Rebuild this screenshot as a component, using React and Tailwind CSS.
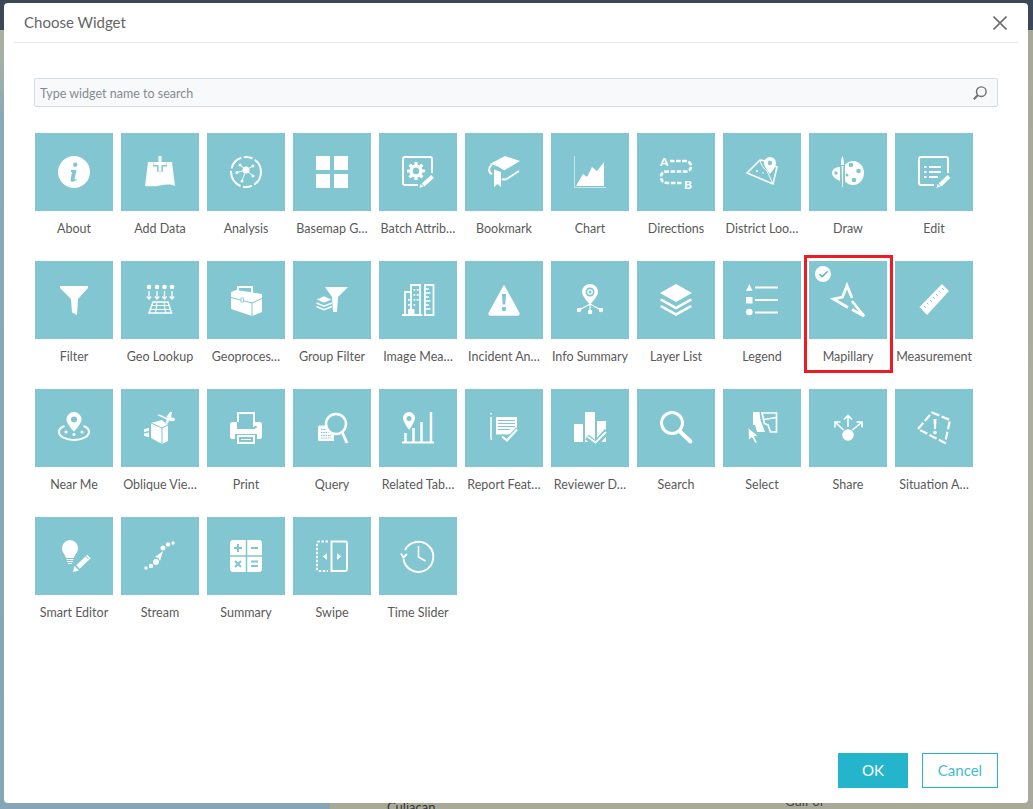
import { Check } from 'lucide-react'

const TEAL = '#81c6d0'

function Ic({ children }) {
  return (
    <svg width="32" height="32" viewBox="0 0 32 32" fill="white" className="overflow-visible">
      {children}
    </svg>
  )
}

// Lapiz con halo del color del tile
function Pencil({ d = 'M20.5 28.5 30 20' }) {
  return (
    <g fill="none">
      <path d={d} stroke={TEAL} strokeWidth="7" />
      <path d={d} stroke="white" strokeWidth="4" />
    </g>
  )
}

function Gear({ x, y }) {
  const teeth = [0, 45, 90, 135]
  return (
    <g transform={`translate(${x} ${y})`}>
      {teeth.map(a => <rect key={a} x="-1.6" y="-9" width="3.2" height="18" rx=".6" transform={`rotate(${a})`} />)}
      <circle r="6.6" />
      <circle r="3.2" fill={TEAL} />
    </g>
  )
}

const icons = {
  about: (
    <>
      <circle cx="16" cy="16" r="16" />
      <circle cx="17.2" cy="8.8" r="2.2" fill={TEAL} />
      <path d="M13 14h5.5l-2 9c-.1.7.6.8 2-.3l.5.9c-2 2-6.8 3.5-6.4-.2l1.4-7.4h-1.2z" fill={TEAL} />
    </>
  ),
  addData: (
    <>
      <path d="M4 6h24l3 24c-5-2.5-10-1.5-15-.5-5 1-10 1-15 .5z" />
      <path d="M16 0v15.5M9 7.5h14" stroke={TEAL} strokeWidth="6" fill="none" />
      <path d="M16 0v15M9.5 7.5h13" stroke="white" strokeWidth="3" fill="none" />
    </>
  ),
  analysis: (
    <>
      <circle cx="16" cy="16" r="15" fill="none" stroke="white" strokeWidth="2" strokeDasharray="15 2.5 9 2.5 19 2.5" />
      <path d="M16 14 7 16.5M16 14 10 9M16 14 23 10M16 14 23 20M16 14 12 25" stroke="white" strokeWidth="1" />
      <circle cx="16" cy="14" r="3.5" />
      <circle cx="7" cy="16.5" r="1.5" /><circle cx="10" cy="9" r="1.5" /><circle cx="23" cy="10" r="1.5" />
      <circle cx="23" cy="20" r="1.5" /><circle cx="12" cy="25" r="1.5" />
    </>
  ),
  basemap: (
    <>
      <rect x="0" y="0" width="14" height="14" /><rect x="18" y="0" width="14" height="14" />
      <rect x="0" y="18" width="14" height="14" /><rect x="18" y="18" width="14" height="14" />
    </>
  ),
  batch: (
    <>
      <path d="M30 17V3a2 2 0 0 0-2-2H3a2 2 0 0 0-2 2v24a2 2 0 0 0 2 2h13" fill="none" stroke="white" strokeWidth="2" />
      <Gear x={14} y={15} />
      <Pencil d="M21 29 30.5 20.5" />
      <path d="M17.5 32l1-4 3 2.5z" />
    </>
  ),
  bookmark: (
    <>
      <path d="M2 8 17 0l15 5-16 9.5C12 11 7 9 2 8z" />
      <path d="M3.5 9C0 12 .5 17 4 18" fill="none" stroke="white" strokeWidth="2" />
      <path d="M6 13.5 13 16v15l-3.5-3L6 31z" />
      <path d="M14 23c2 1 4 .5 5.5-.5L31 15" fill="none" stroke="white" strokeWidth="2" />
    </>
  ),
  chart: (
    <>
      <path d="M.5 0v31.5H32" fill="none" stroke="white" strokeOpacity=".55" />
      <path d="M2 30 9 18l4 3 5-10 5 4 7-9v24z" />
    </>
  ),
  directions: (
    <>
      <path d="M10 5h16q5 1 5 5.5t-5 5H7q-6 0-6 5.5t6 6h16" fill="none" stroke="white" strokeWidth="2.7" strokeDasharray="4.5 1.6" />
      <text x="0" y="9.5" fontSize="12" fontWeight="900" fontFamily="Lato, sans-serif">A</text>
      <text x="24" y="33" fontSize="12" fontWeight="900" fontFamily="Lato, sans-serif">B</text>
    </>
  ),
  district: (
    <>
      <path d="M20 5 14 4 1 17l26 11 4-17-2-.8" fill="none" stroke="white" strokeWidth="1.6" />
      <path d="M14 4c1 5 4 9 7 11l6 13" fill="none" stroke="white" strokeWidth="1" />
      <circle cx="11" cy="15" r="1" /><circle cx="17" cy="17" r=".8" />
      <path d="M24 1a6 6 0 0 0-6 6c0 4 6 11 6 11s6-7 6-11a6 6 0 0 0-6-6z" />
      <circle cx="24" cy="7" r="2.2" fill={TEAL} />
    </>
  ),
  draw: (
    <>
      <ellipse cx="21" cy="17" rx="11" ry="12" />
      <path d="M8 11c-5 0-8 3-8 6 0 4 4 6 8 8z" />
      <circle cx="4" cy="17" r="1.7" fill={TEAL} />
      <circle cx="19" cy="9" r="2.3" fill={TEAL} /><circle cx="26.5" cy="15" r="2.3" fill={TEAL} />
      <circle cx="22" cy="24" r="2.3" fill={TEAL} /><circle cx="15" cy="19" r="1.5" fill={TEAL} />
      <path d="M10.5 0v31" stroke={TEAL} strokeWidth="5" />
      <path d="M10.5 0c1.2 2 1.5 5 1.3 9H9.2c-.2-4 .1-7 1.3-9zM9.7 10h1.6l-.4 21h-.8z" />
    </>
  ),
  edit: (
    <>
      <path d="M30 17V3a2 2 0 0 0-2-2H3a2 2 0 0 0-2 2v24a2 2 0 0 0 2 2h13" fill="none" stroke="white" strokeWidth="2" />
      <path d="M6 11h2.5M6 16h2.5M6 21h2.5M11 11h12M11 16h12M11 21h9" stroke="white" strokeWidth="2" />
      <Pencil d="M22 29 31 20.5" />
      <path d="M18.5 32l1-4 3 2.5z" />
    </>
  ),
  filter: <path d="M2 2h28v2L20 15l-1 16-5-2.5L13 15 2 4z" />,
  geoLookup: (
    <>
      {[5, 13, 20.5, 28].map(x => (
        <g key={x}>
          <circle cx={x} cy="3" r="2.3" />
          <path d={`M${x} 7v7.5M${x - 2.2} 12.5 ${x} 15l2.2-2.5`} fill="none" stroke="white" strokeWidth="1.3" />
        </g>
      ))}
      <path d="M9 18h15l3.5 11H5z" fill="none" stroke="white" strokeWidth="1.5" />
      <path d="M8 21.5h17M7 25.5h19M13 18l-1.5 11M20 18l1.5 11" stroke="white" strokeWidth="1" />
    </>
  ),
  toolbox: (
    <>
      <path d="M8 8V3h14v7" fill="none" stroke="white" strokeWidth="2" />
      <path d="M1 8l5-2 26 4v18l-10 4L1 25z" />
      <path d="M1 13.5 22 19l10-4.5M22 19v13" fill="none" stroke={TEAL} strokeWidth="1" />
      <rect x="11" y="14" width="2.5" height="4" fill="white" stroke={TEAL} strokeWidth=".8" />
    </>
  ),
  groupFilter: (
    <>
      <path d="M9 3h23L22 13l-1 15h-4l-1-15z" />
      <path d="M8 12l8 3.5-8 3.5-8-3.5z" stroke={TEAL} strokeWidth=".6" />
      <path d="M.5 19 8 22.2l8-3.2M.5 22.5 8 25.7l8-3.2" fill="none" stroke="white" strokeWidth="1.5" />
    </>
  ),
  imageMeasure: (
    <>
      <path d="M9 8H3v22M9 30V1h9v29" fill="none" stroke="white" strokeWidth="1.8" />
      <path d="M0 31h20.5" stroke="white" strokeWidth="2" />
      <path d="M11.5 5h1.8v1.8h-1.8zM14.7 5h1.8v1.8h-1.8zM11.5 10h1.8v1.8h-1.8zM14.7 10h1.8v1.8h-1.8zM11.5 15h1.8v1.8h-1.8zM14.7 15h1.8v1.8h-1.8zM6 15h1.8v1.8H6zM6 20h1.8v1.8H6zM11.5 20h1.8v1.8h-1.8z" />
      <path d="M6 30v-5h6.5v5z" />
      <rect x="23" y="1" width="8.5" height="30" fill="none" stroke="white" strokeWidth="1.8" />
      <path d="M23 5h4M23 9h5.5M23 13h4M23 17h5.5M23 21h4M23 25h5.5" stroke="white" strokeWidth="1.3" />
    </>
  ),
  incident: (
    <>
      <path d="M16 2 31 29.5q0 1.5-1.5 1.5h-27Q1 31 1 29.5z" stroke="white" strokeWidth="1.5" strokeLinejoin="round" />
      <path d="M14 10h4l-.7 10.5h-2.6z" fill={TEAL} />
      <circle cx="16" cy="25" r="2.3" fill={TEAL} />
    </>
  ),
  infoSummary: (
    <>
      <path d="M16 0a8 8 0 0 0-8 8c0 4.5 8 12.5 8 12.5S24 12.5 24 8a8 8 0 0 0-8-8z" />
      <circle cx="16" cy="8" r="4.5" fill={TEAL} />
      <circle cx="16" cy="8" r="2.8" fill="white" />
      <circle cx="16" cy="8" r="1.5" fill={TEAL} />
      <path d="M16 20v8M16 20 5 26M16 20l11 6" stroke="white" strokeWidth="1.2" />
      <circle cx="5" cy="26" r="2.3" /><circle cx="16" cy="28" r="2.3" /><circle cx="27" cy="26" r="2.3" />
    </>
  ),
  layers: (
    <>
      <path d="M16 0 32 9l-16 9L0 9z" />
      <path d="m1.5 14.5 14.5 8 14.5-8 1.5 2-16 9-16-9z" />
      <path d="m1.5 21 14.5 8 14.5-8 1.5 2-16 9-16-9z" />
    </>
  ),
  legend: (
    <>
      <path d="M3.3 0 6.6 7H0z" />
      <rect x="0" y="13" width="6.5" height="6.5" />
      <circle cx="3.3" cy="28" r="3.3" />
      <path d="M9 3.5h23M9 16h23M9 28.5h23" stroke="white" strokeWidth="2" />
    </>
  ),
  mapillary: (
    <>
      <path d="M20 14 15 1.5 10.5 13 1.5 15 16 23.5" fill="none" stroke="white" strokeWidth="2.8" />
      <path d="M20 17 32 32l-12-6.5" fill="none" stroke="white" strokeWidth="2.8" />
    </>
  ),
  measurement: (
    <>
      <path d="M1.5 23 24 0l7 7L9 31z" />
      <path d="M6 22l2 2M9 19l1.5 1.5M12 16l2 2M15 13l1.5 1.5M18 10l2 2M21 7l1.5 1.5M24 4l2 2" stroke={TEAL} strokeWidth="1" />
    </>
  ),
  nearMe: (
    <>
      <path d="M6.5 14C2 15.5 1 18 1 20c0 4.5 7 8 15 8s15-3.5 15-8c0-2-1-4.5-5.5-6" fill="none" stroke="white" strokeWidth="2" />
      <path d="M16 0a7.5 7.5 0 0 0-7.5 7.5C8.5 12 16 19.5 16 19.5S23.5 12 23.5 7.5A7.5 7.5 0 0 0 16 0z" />
      <circle cx="16" cy="7.5" r="3" fill={TEAL} />
      <circle cx="8" cy="20" r="1.6" /><circle cx="16" cy="22.5" r="1.6" /><circle cx="24" cy="20" r="1.6" />
    </>
  ),
  oblique: (
    <>
      <path d="M7 11l11-3 6 5v16l-6 3-11-6z" />
      <path d="M7 11l11 5 6-3M18 16v16" fill="none" stroke={TEAL} strokeWidth="1" />
      <path d="M0 17l5-1v3l-5 1zM0 21.5l5-1V25l-5-1z" />
      <path d="M13 3l3-.5 7 3.5 4-.5c2-.3 4 .5 4 2s-2.5 2-4 1.5l-2-.5-1 3h-2l.5-4z" />
      <path d="M22 5.5 26 0h2l-1 6z" />
    </>
  ),
  print: (
    <>
      <path d="M8 10V1h16v14" fill="none" stroke="white" strokeWidth="2" />
      <path d="M2.5 10H7v7h18v-7h4.5A2.5 2.5 0 0 1 32 12.5V25a2 2 0 0 1-2 2h-3v-5H5v5H2a2 2 0 0 1-2-2V12.5A2.5 2.5 0 0 1 2.5 10z" />
      <rect x="8" y="24" width="16" height="7" fill="none" stroke="white" strokeWidth="2" />
      <path d="M11 27.5h10" stroke="white" strokeWidth="1" />
      <circle cx="25.5" cy="15" r="1.3" fill={TEAL} />
    </>
  ),
  query: (
    <>
      <path d="M3.5 13.5H10l8 9V29H3.5A1.5 1.5 0 0 1 2 27.5V15a1.5 1.5 0 0 1 1.5-1.5z" />
      <path d="M5 17.5h7M5 20.5h8M5 23.5h10M5 26h10" stroke={TEAL} strokeWidth="1" strokeDasharray="1.5 .8" />
      <circle cx="20" cy="12" r="10" fill={TEAL} stroke="white" strokeWidth="2.5" />
      <path d="m26 20 5 11" stroke="white" strokeWidth="2.8" />
    </>
  ),
  relatedTable: (
    <>
      <path d="M7 0a6 6 0 0 0-6 6c0 4 6 12 6 12s6-8 6-12a6 6 0 0 0-6-6z" />
      <circle cx="7" cy="6.5" r="2.5" fill={TEAL} />
      <path d="M0 30.5h32" stroke="white" strokeWidth="2" />
      <path d="M3.5 21v9M11.5 16v14M19.5 10v20M29 0v30" stroke="white" strokeWidth="2.5" />
    </>
  ),
  report: (
    <>
      <path d="M3 1v1.5M3 5v21l.5 2" fill="none" stroke="white" strokeWidth="1.5" />
      <path d="M8 5h21v15l-9 2.5H8z" />
      <path d="M10 8.5h17M10 11.5h17M10 14.5h17M10 17.5h12" stroke={TEAL} strokeWidth="1" />
      <path d="m13 24 6 5 11-12" fill="none" stroke={TEAL} strokeWidth="5" />
      <path d="m14 24.5 5 4 10-11" fill="none" stroke="white" strokeWidth="2.2" />
    </>
  ),
  reviewer: (
    <>
      <rect x="0" y="12" width="9" height="18" /><rect x="11" y="0" width="10" height="30" /><rect x="23" y="9" width="9" height="21" />
      <path d="m13 25 8.5 7L33 19" fill="none" stroke={TEAL} strokeWidth="6" />
      <path d="m14 25 7.5 5.5L32 20" fill="none" stroke="white" strokeWidth="1.8" />
    </>
  ),
  search: (
    <>
      <circle cx="12" cy="11" r="10.5" fill="none" stroke="white" strokeWidth="3" />
      <path d="m20 19.5 10.5 10" stroke="white" strokeWidth="4" strokeLinecap="round" />
    </>
  ),
  select: (
    <>
      <path d="M7 0h6.5l1 8 4.5 12H11L9 13H7z" />
      <path d="M16 1h14.5v19h-6l-2.5-7-3.5-1.5z" fill="none" stroke="white" strokeWidth="1.7" />
      <path d="M18 7.5l12.5-2" stroke="white" strokeWidth="1.5" />
      <path d="M2 15.5 12.5 24l-4 .5 3 6-2.5 1-3-6-3.5 3z" stroke={TEAL} strokeWidth="1" />
    </>
  ),
  share: (
    <>
      <circle cx="16" cy="23" r="5.8" />
      <path d="M16 15V4M12 7.5l4-4 4 4M11.5 18 3 10M3 15.5V10h5.5M20.5 18 30 10M24.5 10H30v5.5" fill="none" stroke="white" strokeWidth="1.6" />
    </>
  ),
  situation: (
    <>
      <path d="M14 .5 32 8l-5 23-27-14z" fill="none" stroke="white" strokeWidth="2.2" strokeLinejoin="round" strokeDasharray="8 2.5" />
      <path d="M15.5 7h3l-.5 10h-2z" />
      <circle cx="17" cy="20.5" r="1.8" />
    </>
  ),
  smartEditor: (
    <>
      <path d="M12 0a8.2 8.2 0 0 0-8 8.5c0 4 3 5.5 4 9.5h8c1-4 4-5.5 4-9.5A8.2 8.2 0 0 0 12 0z" />
      <path d="M8.5 19.5h7M9 21.5h6M10 23.5h4" stroke="white" strokeWidth="1" />
      <path d="m20 27 11-10.5" stroke="white" strokeWidth="5" />
      <path d="m15 32 1.5-6 4.5 4.5z" />
      <path d="m27 15 3.5 4" stroke={TEAL} strokeWidth="1" />
    </>
  ),
  stream: (
    <>
      <circle cx="2" cy="28" r="1.7" /><circle cx="7" cy="26" r="2.2" /><circle cx="12" cy="22" r="3" />
      <path d="M11 17 19 11l-3 10-1.5-3z" />
      <circle cx="19" cy="8" r="2.5" /><circle cx="24" cy="4.5" r="2.2" /><circle cx="29" cy="3" r="1.7" />
    </>
  ),
  summary: (
    <>
      <rect x="0" y="0" width="32" height="32" rx="3" />
      <path d="M16.5 0v32M0 16h32" stroke={TEAL} strokeWidth="1.5" />
      <path d="M4 8h8M8 4v8M21 8h7M5 21l6 6M11 21l-6 6M21 21.5h7M21 26h7" stroke={TEAL} strokeWidth="2" />
    </>
  ),
  swipe: (
    <>
      <path d="M12 1.5H3a2 2 0 0 0-2 2V29a2 2 0 0 0 2 2h9" fill="none" stroke="white" strokeWidth="2" strokeDasharray="2.5 1.5" />
      <path d="M15.5 1.5H29a2 2 0 0 1 2 2V29a2 2 0 0 1-2 2H15.5z" fill="none" stroke="white" strokeWidth="2" />
      <path d="M7 16.5 11 13v7zM25 16.5 21 13v7z" />
    </>
  ),
  timeSlider: (
    <>
      <path d="M3 10A15 15 0 1 1 1.5 19" fill="none" stroke="white" strokeWidth="2" />
      <path d="M-1 13.5l2.5 4 3.500-3.500" fill="none" stroke="white" strokeWidth="2" />
      <path d="M16.5 6v11l7 4" fill="none" stroke="white" strokeWidth="1.6" />
    </>
  ),
}

const widgets = [
  ['About', 'about'], ['Add Data', 'addData'], ['Analysis', 'analysis'], ['Basemap G…', 'basemap'],
  ['Batch Attrib…', 'batch'], ['Bookmark', 'bookmark'], ['Chart', 'chart'], ['Directions', 'directions'],
  ['District Loo…', 'district'], ['Draw', 'draw'], ['Edit', 'edit'],
  ['Filter', 'filter'], ['Geo Lookup', 'geoLookup'], ['Geoproces…', 'toolbox'], ['Group Filter', 'groupFilter'],
  ['Image Mea…', 'imageMeasure'], ['Incident An…', 'incident'], ['Info Summary', 'infoSummary'], ['Layer List', 'layers'],
  ['Legend', 'legend'], ['Mapillary', 'mapillary'], ['Measurement', 'measurement'],
  ['Near Me', 'nearMe'], ['Oblique Vie…', 'oblique'], ['Print', 'print'], ['Query', 'query'],
  ['Related Tab…', 'relatedTable'], ['Report Feat…', 'report'], ['Reviewer D…', 'reviewer'], ['Search', 'search'],
  ['Select', 'select'], ['Share', 'share'], ['Situation A…', 'situation'],
  ['Smart Editor', 'smartEditor'], ['Stream', 'stream'], ['Summary', 'summary'], ['Swipe', 'swipe'], ['Time Slider', 'timeSlider'],
]

function WidgetTile({ label, icon }) {
  const selected = label === 'Mapillary'
  return (
    <div className="relative">
      {selected && <div className="absolute left-[-5px] top-[-6px] w-[89px] h-[118px] border-[3px] border-[#ed1c24]" />}
      <div className="relative w-[78px] h-[78px] bg-[#81c6d0] flex items-center justify-center">
        {selected && (
          <span className="absolute left-[6px] top-[5px] w-[16px] h-[16px] rounded-full bg-white flex items-center justify-center">
            <Check size={11} strokeWidth={3} className="text-[#5fa9b8]" />
          </span>
        )}
        <Ic>{icons[icon]}</Ic>
      </div>
      <p className="mt-[9px] -mx-1 text-center text-[12.5px] leading-[18px] text-[#5a5a5a] whitespace-nowrap">{label}</p>
    </div>
  )
}

export default function App() {
  return (
    <div className="relative w-[1033px] h-[809px] overflow-hidden flex flex-col font-['Lato','Liberation_Sans',sans-serif]">
      {/* Mapa de fondo, casi todo tapado por el dialogo */}
      <div className="h-[30px] bg-[#3c4855]" />
      <div className="flex-1 flex">
        <div className="w-[330px] bg-[linear-gradient(180deg,#aeb09a_0,#9fb0a8_40px,#8aa8b8_90px,#86a6b8_100%)]" />
        <div className="flex-1 bg-[linear-gradient(180deg,#a8a896_0,#b0ae9c_60%,#a9a99a_100%)]" />
      </div>
      <span className="absolute left-[387px] top-[798px] text-[13px] text-[#333]">Culiacan</span>
      <span className="absolute left-[785px] top-[792px] text-[13px] text-[#444]">Gulf of</span>

      {/* Dialogo */}
      <div className="absolute left-[4px] top-[3px] w-[1024px] h-[800px] bg-white rounded-[4px] flex flex-col">
        <div className="mx-[10px] h-[40px] border-b border-[#e3ecf3] flex items-center justify-between pl-[10px] pr-[10px]">
          <h1 className="text-[15px] font-normal text-[#666]">Choose Widget</h1>
          <svg width="14" height="14" viewBox="0 0 14 14" className="mr-[1px]">
            <path d="M.5.5l13 13M13.5.5l-13 13" stroke="#6e6e6e" strokeWidth="1.6" />
          </svg>
        </div>

        <div className="mx-[30px] mt-[35px] h-[29px] bg-[#f8f9fb] border border-[#d3dde5] rounded-[2px] flex items-center justify-between pl-[5px] pr-[10px]">
          <span className="pt-[3px] text-[12.5px] text-[#858a90]">Type widget name to search</span>
          <svg width="14" height="14" viewBox="0 0 14 14" fill="none" stroke="#6e6e6e">
            <circle cx="8.3" cy="5.7" r="4.8" strokeWidth="1.4" />
            <path d="M4.8 9.2.8 13.2" strokeWidth="2" />
          </svg>
        </div>

        <div className="ml-[31px] mt-[26px] grid grid-cols-[repeat(11,78px)] auto-rows-[128px] gap-x-[8px]">
          {widgets.map(w => <WidgetTile key={w[0]} label={w[0]} icon={w[1]} />)}
        </div>

        <div className="mt-auto mb-[15px] mr-[30px] flex justify-end gap-[14px]">
          <button type="button" className="w-[70px] h-[35px] bg-[#24b5cc] text-white text-[15px]">OK</button>
          <button type="button" className="w-[76px] h-[35px] bg-white border border-[#24b5cc] text-[#45bcd2] text-[15px]">Cancel</button>
        </div>
      </div>
    </div>
  )
}
